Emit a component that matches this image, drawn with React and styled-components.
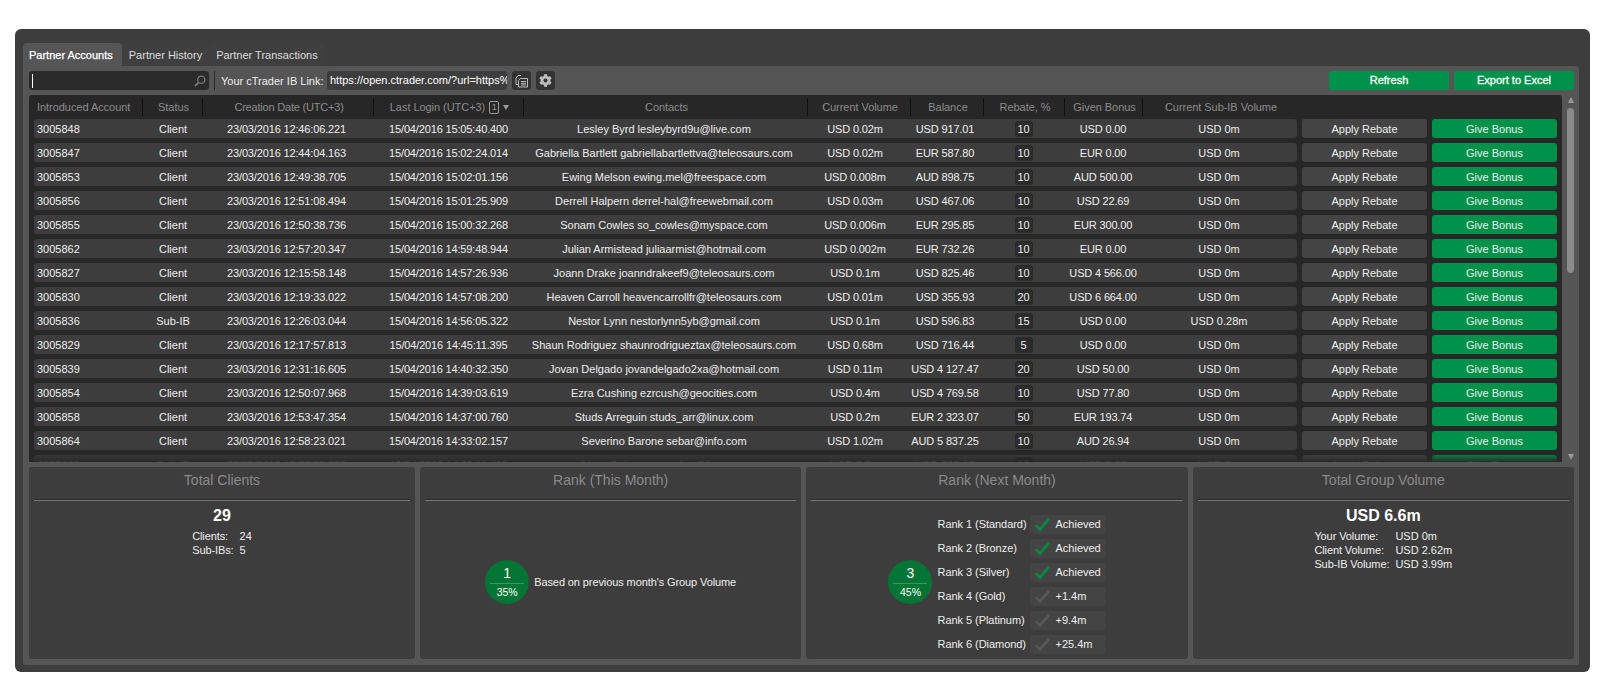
import React from 'react';
import styled, { createGlobalStyle } from 'styled-components';
import { FaCog } from 'react-icons/fa';

const Global = createGlobalStyle`
  html, body { margin: 0; padding: 0; background: #fff; }
  body { font-family: "Liberation Sans", Arial, sans-serif; font-size: 11px; color: #eee; }
`;

const COLS = '110px 58px 165px 157px 283px 99px 78px 79px 80px 154px';
const HEAD_COLS = '109px 60px 171px 150px 284px 103px 73px 81px 78px 154px';

const Shell = styled.div`
  box-sizing: border-box;
  width: 1575px;
  height: 643px;
  margin: 29px 0 0 15px;
  padding: 14px 11px 7px 8px;
  background: #3d3d3d;
  border-radius: 6px;
  display: flex;
  flex-direction: column;
`;
const Tabs = styled.div`
  display: flex;
  height: 23px;
  flex: none;
`;
const Tab = styled.div`
  display: flex;
  align-items: center;
  padding: ${p => (p.$active ? '0 9px 0 6px' : '0 7px')};
  border-radius: 4px 4px 0 0;
  color: ${p => (p.$active ? '#fff' : '#ddd')};
  background: ${p => (p.$active ? '#555' : '#3f3f3f')};
  -webkit-text-stroke: ${p => (p.$active ? '0.25px #fff' : '0')};
`;
const Panel = styled.div`
  flex: 1;
  min-height: 0;
  background: #555;
  border-radius: 0 3px 3px 3px;
  padding: 5px 5px 6px 6px;
  display: flex;
  flex-direction: column;
`;
const Toolbar = styled.div`
  display: flex;
  align-items: center;
  height: 19px;
  margin-bottom: 5px;
  flex: none;
`;
const Search = styled.div`
  box-sizing: border-box;
  width: 180px;
  height: 19px;
  background: #2b2b2b;
  border-radius: 3px;
  display: flex;
  align-items: center;
  justify-content: space-between;
  padding: 0 3px;
`;
const Caret = styled.span`
  width: 1px;
  height: 14px;
  background: #fff;
`;
const ToolDivider = styled.span`
  width: 1px;
  height: 19px;
  background: #2a2a2a;
  margin: 0 6px 0 5px;
`;
const LinkLabel = styled.span`
  width: 106px;
  color: #eee;
`;
const LinkField = styled.div`
  box-sizing: border-box;
  width: 180px;
  height: 19px;
  line-height: 19px;
  padding: 0 3px;
  border-radius: 3px;
  background: #3d3d3d;
  color: #fff;
  white-space: nowrap;
  overflow: hidden;
`;
const IconBtn = styled.div`
  width: 19px;
  height: 19px;
  margin-left: 5px;
  border-radius: 3px;
  background: #333;
  color: #bbb;
  display: flex;
  align-items: center;
  justify-content: center;
`;
const Spacer = styled.div`
  flex: 1;
`;
const GreenBtn = styled.div`
  width: 120px;
  height: 19px;
  line-height: 19px;
  margin-left: 5px;
  text-align: center;
  background: #00924a;
  border-radius: 3px;
  color: #fff;
  -webkit-text-stroke: 0.3px #fff;
`;
const TableWrap = styled.div`
  height: 367px;
  flex: none;
  display: flex;
`;
const TableArea = styled.div`
  position: relative;
  box-sizing: border-box;
  width: 1533px;
  padding: 0 5px;
  background: #272727;
  border-radius: 3px 3px 0 0;
  overflow: hidden;
`;
const HeaderRow = styled.div`
  display: grid;
  grid-template-columns: ${HEAD_COLS};
  height: 24px;
  align-items: center;
`;
const HeadCell = styled.div`
  box-sizing: border-box;
  height: 18px;
  line-height: 18px;
  padding-left: ${p => (p.$first ? '3px' : '2px')};
  color: #8c8c8c;
  white-space: nowrap;
  letter-spacing: ${p => (p.$tight ? '-0.2px' : '-0.05px')};
  border-right: ${p => (p.$last ? 'none' : '1px solid #111')};
  display: flex;
  align-items: center;
  justify-content: ${p => (p.$first ? 'flex-start' : 'center')};
  gap: 4px;
`;
const Badge = styled.span`
  box-sizing: border-box;
  width: 10px;
  height: 13px;
  line-height: 11px;
  border: 1px solid #999;
  border-radius: 2px;
  font-size: 9px;
  color: #999;
  text-align: center;
`;
const SortArrow = styled.span`
  width: 0;
  height: 0;
  border-left: 3px solid transparent;
  border-right: 3px solid transparent;
  border-top: 5px solid #999;
`;
const DataRow = styled.div`
  display: flex;
  gap: 5px;
  margin-bottom: 5px;
  height: 19px;
`;
const RowCells = styled.div`
  display: grid;
  grid-template-columns: ${COLS};
  grid-template-rows: 19px;
  width: 1263px;
  background: #3d3d3d;
  border-radius: 3px;
  line-height: 21px;
`;
const Cell = styled.div`
  text-align: ${p => (p.$left ? 'left' : 'center')};
  padding-left: ${p => p.$pl || '0'};
  padding-right: ${p => p.$pr || '0'};
  letter-spacing: ${p => (p.$num ? '-0.15px' : '0')};
  color: #eee;
  white-space: nowrap;
`;
const RebateChip = styled.span`
  display: inline-block;
  min-width: 18px;
  height: 16px;
  line-height: 17px;
  background: #2b2b2b;
  border-radius: 3px;
  vertical-align: top;
  margin-top: 2px;
`;
const RowBtn = styled.div`
  width: 125px;
  height: 19px;
  line-height: 21px;
  text-align: center;
  border-radius: 3px;
  color: #eee;
  background: ${p => (p.$green ? '#00924a' : '#444')};
`;
const Fade = styled.div`
  position: absolute;
  left: 0;
  right: 0;
  bottom: 0;
  height: 8px;
  background: linear-gradient(to bottom, rgba(39,39,39,0.1), rgba(39,39,39,0.95));
`;
const Scrollbar = styled.div`
  width: 12px;
  display: flex;
  flex-direction: column;
  align-items: flex-end;
  padding-top: 1px;
`;
const ScrollUp = styled.span`
  width: 0;
  height: 0;
  margin: 1px 0 5px;
  border-left: 3.5px solid transparent;
  border-right: 3.5px solid transparent;
  border-bottom: 6px solid #999;
`;
const Thumb = styled.div`
  width: 7px;
  height: 165px;
  background: #8a8a8a;
  border-radius: 4px;
`;
const ScrollDown = styled(ScrollUp)`
  margin: auto 0 2px;
  border-bottom: none;
  border-top: 6px solid #999;
`;
const Cards = styled.div`
  flex: 1;
  min-height: 0;
  margin-top: 5px;
  display: grid;
  grid-template-columns: 386px 1fr 1fr 1fr;
  column-gap: 5px;
`;
const Card = styled.div`
  background: #3d3d3d;
  border-radius: 3px;
  padding: 0 5px;
  display: flex;
  flex-direction: column;
`;
const CardTitle = styled.div`
  height: 33px;
  line-height: 27px;
  text-align: center;
  font-size: 14px;
  color: #8a8a8a;
  border-bottom: 1px solid #777;
  box-shadow: inset 0 -1px 0 #2d2d2d;
  flex: none;
`;
const CardBody = styled.div`
  flex: 1;
  display: flex;
  flex-direction: column;
  align-items: center;
`;
const BigNumber = styled.div`
  font-size: 16px;
  font-weight: bold;
  color: #fff;
  line-height: 18px;
  margin: 6px 0 4px;
`;
const Stats = styled.div`
  display: grid;
  grid-template-columns: auto auto;
  line-height: 14px;
  column-gap: 6px;
  color: #eee;
`;
const StatLabel = styled.span`
  letter-spacing: -0.1px;
`;
const CenterBody = styled.div`
  flex: 1;
  display: flex;
  align-items: center;
  justify-content: center;
  padding-top: 3px;
`;
const Circle = styled.div`
  width: 44px;
  height: 44px;
  border-radius: 50%;
  background: #057535;
  flex: none;
  margin-right: 5px;
  display: flex;
  flex-direction: column;
  align-items: center;
  color: #fff;
`;
const CircleTop = styled.div`
  box-sizing: border-box;
  width: 34px;
  height: 24px;
  padding-top: 4px;
  line-height: 18px;
  text-align: center;
  font-size: 14px;
  border-bottom: 1px solid #3c9463;
`;
const CirclePct = styled.div`
  line-height: 15px;
  font-size: 10.5px;
  text-align: center;
  margin-top: 1px;
`;
const BasedText = styled.span`
  color: #eee;
  letter-spacing: -0.1px;
`;
const RankList = styled.div`
  display: flex;
  flex-direction: column;
  gap: 5px;
  margin-top: 6px;
`;
const RankRow = styled.div`
  display: flex;
  height: 19px;
  line-height: 19px;
`;
const RankName = styled.span`
  width: 93px;
  color: #eee;
  letter-spacing: -0.05px;
`;
const RankChip = styled.div`
  width: 75px;
  height: 19px;
  background: #444;
  border-radius: 3px;
  display: flex;
  align-items: center;
  padding-left: 5px;
  box-sizing: border-box;
  gap: 5px;
`;

const rows = [
  ['3005848','Client','23/03/2016 12:46:06.221','15/04/2016 15:05:40.400','Lesley Byrd lesleybyrd9u@live.com','USD 0.02m','USD 917.01','10','USD 0.00','USD 0m'],
  ['3005847','Client','23/03/2016 12:44:04.163','15/04/2016 15:02:24.014','Gabriella Bartlett gabriellabartlettva@teleosaurs.com','USD 0.02m','EUR 587.80','10','EUR 0.00','USD 0m'],
  ['3005853','Client','23/03/2016 12:49:38.705','15/04/2016 15:02:01.156','Ewing Melson ewing.mel@freespace.com','USD 0.008m','AUD 898.75','10','AUD 500.00','USD 0m'],
  ['3005856','Client','23/03/2016 12:51:08.494','15/04/2016 15:01:25.909','Derrell Halpern derrel-hal@freewebmail.com','USD 0.03m','USD 467.06','10','USD 22.69','USD 0m'],
  ['3005855','Client','23/03/2016 12:50:38.736','15/04/2016 15:00:32.268','Sonam Cowles so_cowles@myspace.com','USD 0.006m','EUR 295.85','10','EUR 300.00','USD 0m'],
  ['3005862','Client','23/03/2016 12:57:20.347','15/04/2016 14:59:48.944','Julian Armistead juliaarmist@hotmail.com','USD 0.002m','EUR 732.26','10','EUR 0.00','USD 0m'],
  ['3005827','Client','23/03/2016 12:15:58.148','15/04/2016 14:57:26.936','Joann Drake joanndrakeef9@teleosaurs.com','USD 0.1m','USD 825.46','10','USD 4 566.00','USD 0m'],
  ['3005830','Client','23/03/2016 12:19:33.022','15/04/2016 14:57:08.200','Heaven Carroll heavencarrollfr@teleosaurs.com','USD 0.01m','USD 355.93','20','USD 6 664.00','USD 0m'],
  ['3005836','Sub-IB','23/03/2016 12:26:03.044','15/04/2016 14:56:05.322','Nestor Lynn nestorlynn5yb@gmail.com','USD 0.1m','USD 596.83','15','USD 0.00','USD 0.28m'],
  ['3005829','Client','23/03/2016 12:17:57.813','15/04/2016 14:45:11.395','Shaun Rodriguez shaunrodrigueztax@teleosaurs.com','USD 0.68m','USD 716.44','5','USD 0.00','USD 0m'],
  ['3005839','Client','23/03/2016 12:31:16.605','15/04/2016 14:40:32.350','Jovan Delgado jovandelgado2xa@hotmail.com','USD 0.11m','USD 4 127.47','20','USD 50.00','USD 0m'],
  ['3005854','Client','23/03/2016 12:50:07.968','15/04/2016 14:39:03.619','Ezra Cushing ezrcush@geocities.com','USD 0.4m','USD 4 769.58','10','USD 77.80','USD 0m'],
  ['3005858','Client','23/03/2016 12:53:47.354','15/04/2016 14:37:00.760','Studs Arreguin studs_arr@linux.com','USD 0.2m','EUR 2 323.07','50','EUR 193.74','USD 0m'],
  ['3005864','Client','23/03/2016 12:58:23.021','15/04/2016 14:33:02.157','Severino Barone sebar@info.com','USD 1.02m','AUD 5 837.25','10','AUD 26.94','USD 0m'],
  ['3005840','Sub-IB','23/03/2016 12:32:03.002','15/04/2016 14:30:11.412','Mara Quinn maraquinn@live.com','USD 0.3m','USD 512.10','10','USD 0.00','USD 0m'],
];

const heads = ['Introduced Account','Status','Creation Date (UTC+3)',null,'Contacts','Current Volume','Balance','Rebate, %','Given Bonus','Current Sub-IB Volume'];

const ranks = [
  ['Rank 1 (Standard)', 'Achieved', true],
  ['Rank 2 (Bronze)', 'Achieved', true],
  ['Rank 3 (Silver)', 'Achieved', true],
  ['Rank 4 (Gold)', '+1.4m', false],
  ['Rank 5 (Platinum)', '+9.4m', false],
  ['Rank 6 (Diamond)', '+25.4m', false],
];

const Check = ({ on }) => (
  <svg width="15" height="13" viewBox="0 0 15 13">
    <path d="M1 7.5 L5 11.5 L14 1" fill="none" stroke={on ? '#068a41' : '#565656'} strokeWidth="2.8" />
  </svg>
);
const SearchIcon = () => (
  <svg width="12" height="12" viewBox="0 0 12 12">
    <circle cx="7.2" cy="4.8" r="3.6" fill="none" stroke="#777" strokeWidth="1.3" />
    <path d="M4.6 7.4 L1 11" stroke="#777" strokeWidth="1.8" />
  </svg>
);
const CopyIcon = () => (
  <svg width="14" height="14" viewBox="0 0 14 14" fill="none" stroke="#bbb" strokeWidth="1">
    <path d="M6 1.5 H3 L1 4 V10.5 H3.5" />
    <path d="M5.5 4.5 H12.5 V13 H3.5 V6.5 Z" />
    <path d="M6 7.5 H11 M6 9.3 H11 M6 11 H11" />
  </svg>
);

export default function App() {
  return (
    <Shell>
      <Global />
      <Tabs>
        <Tab $active>Partner Accounts</Tab>
        <Tab>Partner History</Tab>
        <Tab>Partner Transactions</Tab>
      </Tabs>
      <Panel>
        <Toolbar>
          <Search><Caret /><SearchIcon /></Search>
          <ToolDivider />
          <LinkLabel>Your cTrader IB Link:</LinkLabel>
          <LinkField>https://open.ctrader.com/?url=https%3A%2F%2Fct</LinkField>
          <IconBtn><CopyIcon /></IconBtn>
          <IconBtn><FaCog size={13} /></IconBtn>
          <Spacer />
          <GreenBtn>Refresh</GreenBtn>
          <GreenBtn>Export to Excel</GreenBtn>
        </Toolbar>
        <TableWrap>
          <TableArea>
            <HeaderRow>
              {heads.map((h, i) => (
                <HeadCell key={i} $first={i === 0} $last={i === 9} $tight={i === 2}>
                  {h === null ? (<>Last Login (UTC+3)<Badge>1</Badge><SortArrow /></>) : h}
                </HeadCell>
              ))}
            </HeaderRow>
            {rows.map(r => (
              <DataRow key={r[0]}>
                <RowCells>
                  <Cell $left $pl="3px">{r[0]}</Cell>
                  <Cell>{r[1]}</Cell>
                  <Cell $num $pl="4px">{r[2]}</Cell>
                  <Cell $num $pl="6px">{r[3]}</Cell>
                  <Cell $pr="3px">{r[4]}</Cell>
                  <Cell $num $pr="3px">{r[5]}</Cell>
                  <Cell $num>{r[6]}</Cell>
                  <Cell><RebateChip>{r[7]}</RebateChip></Cell>
                  <Cell $num>{r[8]}</Cell>
                  <Cell $pr="2px">{r[9]}</Cell>
                </RowCells>
                <RowBtn>Apply Rebate</RowBtn>
                <RowBtn $green>Give Bonus</RowBtn>
              </DataRow>
            ))}
            <Fade />
          </TableArea>
          <Scrollbar>
            <ScrollUp />
            <Thumb />
            <ScrollDown />
          </Scrollbar>
        </TableWrap>
        <Cards>
          <Card>
            <CardTitle>Total Clients</CardTitle>
            <CardBody>
              <BigNumber>29</BigNumber>
              <Stats>
                <StatLabel>Clients:</StatLabel><span>24</span>
                <StatLabel>Sub-IBs:</StatLabel><span>5</span>
              </Stats>
            </CardBody>
          </Card>
          <Card>
            <CardTitle>Rank (This Month)</CardTitle>
            <CenterBody>
              <Circle><CircleTop>1</CircleTop><CirclePct>35%</CirclePct></Circle>
              <BasedText>Based on previous month's Group Volume</BasedText>
            </CenterBody>
          </Card>
          <Card>
            <CardTitle>Rank (Next Month)</CardTitle>
            <CenterBody>
              <Circle><CircleTop>3</CircleTop><CirclePct>45%</CirclePct></Circle>
              <RankList>
                {ranks.map(([n, v, on]) => (
                  <RankRow key={n}>
                    <RankName>{n}</RankName>
                    <RankChip><Check on={on} />{v}</RankChip>
                  </RankRow>
                ))}
              </RankList>
            </CenterBody>
          </Card>
          <Card>
            <CardTitle>Total Group Volume</CardTitle>
            <CardBody>
              <BigNumber>USD 6.6m</BigNumber>
              <Stats>
                <StatLabel>Your Volume:</StatLabel><span>USD 0m</span>
                <StatLabel>Client Volume:</StatLabel><span>USD 2.62m</span>
                <StatLabel>Sub-IB Volume:</StatLabel><span>USD 3.99m</span>
              </Stats>
            </CardBody>
          </Card>
        </Cards>
      </Panel>
    </Shell>
  );
}
